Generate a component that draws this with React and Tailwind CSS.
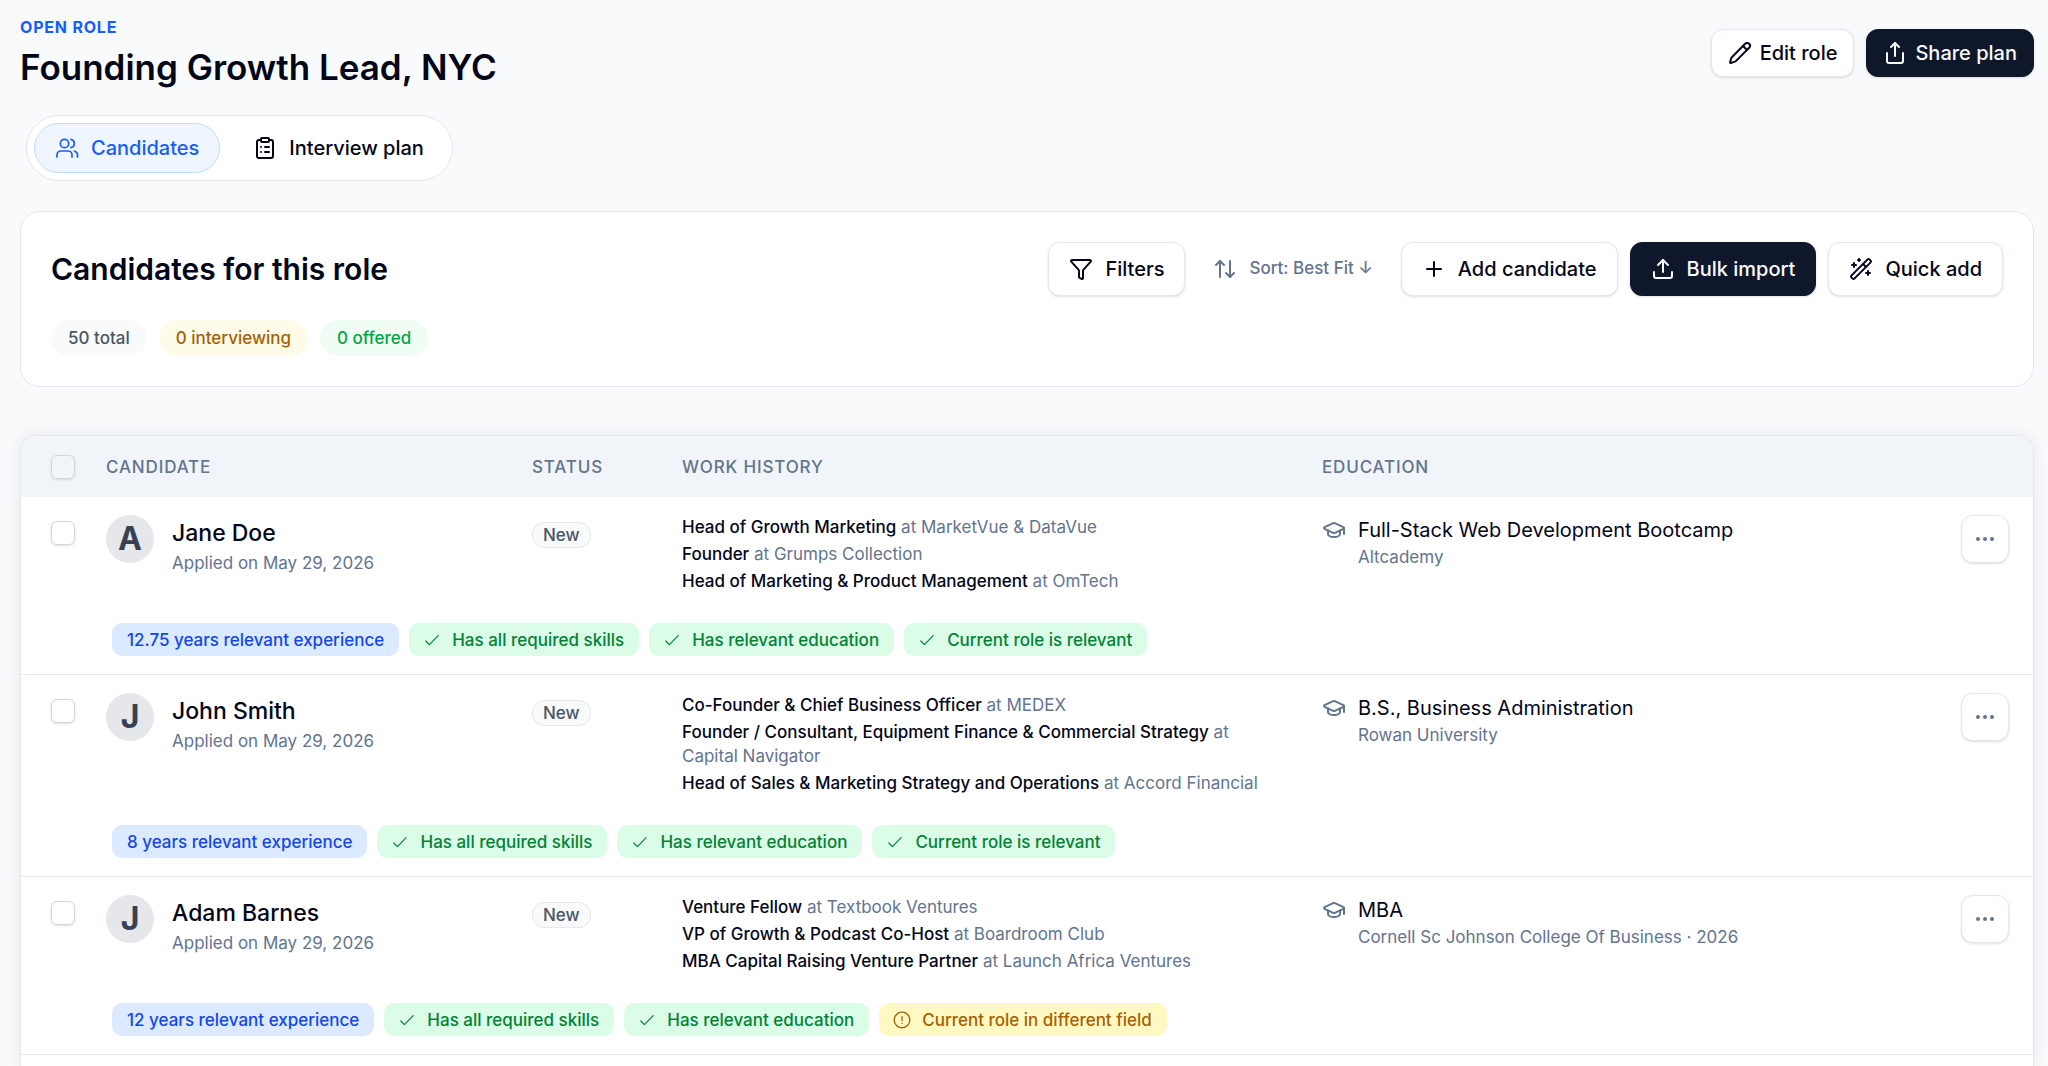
import {
  ArrowUpDown,
  ClipboardList,
  Ellipsis,
  Funnel,
  GraduationCap,
  Pencil,
  Plus,
  Share,
  Upload,
  WandSparkles,
} from 'lucide-react'
import clsx from 'clsx'

const candidates = [
  {
    id: 1,
    initial: 'A',
    name: 'Jane Doe',
    applied: 'May 29, 2026',
    status: 'New',
    work: [
      { title: 'Head of Growth Marketing', company: 'MarketVue & DataVue' },
      { title: 'Founder', company: 'Grumps Collection' },
      { title: 'Head of Marketing & Product Management', company: 'OmTech' },
    ],
    education: { degree: 'Full-Stack Web Development Bootcamp', school: 'Altcademy' },
    tags: [
      { kind: 'info', label: '12.75 years relevant experience' },
      { kind: 'ok', label: 'Has all required skills' },
      { kind: 'ok', label: 'Has relevant education' },
      { kind: 'ok', label: 'Current role is relevant' },
    ],
  },
  {
    id: 2,
    initial: 'J',
    name: 'John Smith',
    applied: 'May 29, 2026',
    status: 'New',
    work: [
      { title: 'Co-Founder & Chief Business Officer', company: 'MEDEX' },
      { title: 'Founder / Consultant, Equipment Finance & Commercial Strategy', company: 'Capital Navigator' },
      { title: 'Head of Sales & Marketing Strategy and Operations', company: 'Accord Financial' },
    ],
    education: { degree: 'B.S., Business Administration', school: 'Rowan University' },
    tags: [
      { kind: 'info', label: '8 years relevant experience' },
      { kind: 'ok', label: 'Has all required skills' },
      { kind: 'ok', label: 'Has relevant education' },
      { kind: 'ok', label: 'Current role is relevant' },
    ],
  },
  {
    id: 3,
    initial: 'J',
    name: 'Adam Barnes',
    applied: 'May 29, 2026',
    status: 'New',
    work: [
      { title: 'Venture Fellow', company: 'Textbook Ventures' },
      { title: 'VP of Growth & Podcast Co-Host', company: 'Boardroom Club' },
      { title: 'MBA Capital Raising Venture Partner', company: 'Launch Africa Ventures' },
    ],
    education: { degree: 'MBA', school: 'Cornell Sc Johnson College Of Business · 2026' },
    tags: [
      { kind: 'info', label: '12 years relevant experience' },
      { kind: 'ok', label: 'Has all required skills' },
      { kind: 'ok', label: 'Has relevant education' },
      { kind: 'warn', label: 'Current role in different field' },
    ],
  },
]

const tagStyles = {
  info: 'bg-blue-100 text-blue-700',
  ok: 'bg-green-100 text-green-700',
  warn: 'bg-yellow-100 text-yellow-700',
}

export default function App() {
  return (
    <div className="flex min-h-screen flex-col bg-[#f9fafc] pt-[15px] pr-[14px] pl-5 font-['Inter',sans-serif] text-slate-950">
      <header className="flex items-center justify-between">
        <div>
          <p className="text-base leading-6 font-bold tracking-wider text-blue-600 uppercase">Open role</p>
          <h1 className="mt-1 text-[35px] leading-[48px] font-semibold">Founding Growth Lead, NYC</h1>
        </div>
        <div className="flex gap-3">
          <Button size="sm"><Pencil className="size-6" strokeWidth={2} />Edit role</Button>
          <Button size="sm" dark><Share className="size-6" strokeWidth={2} />Share plan</Button>
        </div>
      </header>

      <nav className="mt-6 ml-1.5 flex gap-3 self-start rounded-full border border-slate-200 bg-white p-[7px]">
        <Tab active><UsersIcon />Candidates</Tab>
        <Tab><ClipboardList className="size-6" strokeWidth={2} />Interview plan</Tab>
      </nav>

      {/* Summary + actions */}
      <section className="mt-[30px] rounded-[20px] border border-slate-200 bg-white p-[30px]">
        <div className="flex items-center justify-between">
          <h2 className="text-3xl font-semibold">Candidates for this role</h2>
          <div className="flex gap-3">
            <Button><Funnel className="size-6" strokeWidth={2} />Filters</Button>
            <button type="button" className="flex items-center gap-3 px-4 text-[17px] font-medium text-slate-500">
              <ArrowUpDown className="size-6" strokeWidth={2} />
              Sort: Best Fit ↓
            </button>
            <Button><Plus className="size-6" strokeWidth={2} />Add candidate</Button>
            <Button dark><Upload className="size-6" strokeWidth={2} />Bulk import</Button>
            <Button><WandSparkles className="size-6" strokeWidth={2} />Quick add</Button>
          </div>
        </div>
        <div className="mt-6 flex gap-3 text-[17px] leading-9 font-medium">
          <span className="rounded-full bg-gray-50 px-[17px] text-gray-600">50 total</span>
          <span className="rounded-full bg-yellow-50 px-[17px] text-yellow-700">0 interviewing</span>
          <span className="rounded-full bg-green-50 px-[17px] text-green-600">0 offered</span>
        </div>
      </section>

      {/* Candidate list */}
      <div className="mt-12 flex-1 overflow-hidden rounded-t-2xl border border-b-0 border-slate-200 bg-white shadow-[0_0_16px_rgba(15,23,42,0.08)]">
        <table className="w-full table-fixed text-left text-[17px] leading-6">
          <colgroup>
            <col className="w-[85px]" />
            <col className="w-[426px]" />
            <col className="w-[150px]" />
            <col className="w-[640px]" />
            <col />
            <col className="w-[72px]" />
          </colgroup>
          <thead className="bg-slate-100 text-slate-500 uppercase">
            <tr className="h-[61px] tracking-wider">
              <th className="pl-[30px]"><Checkbox label="Select all candidates" /></th>
              <th className="font-medium">Candidate</th>
              <th className="font-medium">Status</th>
              <th className="font-medium">Work history</th>
              <th className="font-medium">Education</th>
              <th />
            </tr>
          </thead>
          {candidates.map((c) => <CandidateRow key={c.id} candidate={c} />)}
        </table>
      </div>
    </div>
  )
}

function CandidateRow({ candidate: c }) {
  return (
    <tbody className="border-b border-slate-200">
      <tr className="align-top">
        <td className="pt-6 pl-[30px]"><Checkbox label={`Select ${c.name}`} /></td>
        <td className="pt-[18px]">
          <div className="flex gap-[18px]">
            <span className="flex size-12 items-center justify-center rounded-full bg-gray-200 text-[32px] font-bold text-gray-700">
              {c.initial}
            </span>
            <div className="flex flex-col gap-1 pt-1">
              <p className="text-[23px] leading-7 font-medium">{c.name}</p>
              <p className="text-slate-500">Applied on {c.applied}</p>
            </div>
          </div>
        </td>
        <td className="pt-[25px]">
          <span className="block w-fit rounded-xl border border-gray-200 bg-gray-50 px-2.5 font-medium text-gray-600">
            {c.status}
          </span>
        </td>
        <td className="pt-[18px] pr-9">
          <ul className="space-y-[3px]">
            {c.work.map((job) => (
              <li key={job.title} className="text-slate-500">
                <span className="font-medium text-slate-950">{job.title}</span> at {job.company}
              </li>
            ))}
          </ul>
        </td>
        <td className="pt-[18px]">
          <div className="flex gap-3">
            <GraduationCap className="mt-[3px] size-6 shrink-0 text-slate-500" strokeWidth={2} />
            <div>
              <p className="text-xl leading-[30px]">{c.education.degree}</p>
              <p className="text-slate-500">{c.education.school}</p>
            </div>
          </div>
        </td>
        <td className="pt-[18px]">
          <button
            type="button"
            aria-label={`Actions for ${c.name}`}
            className="flex size-12 items-center justify-center rounded-xl border border-slate-200 bg-white text-slate-500 shadow-sm"
          >
            <Ellipsis className="size-6" />
          </button>
        </td>
      </tr>
      <tr>
        <td />
        <td colSpan={5} className="pt-[30px] pb-[18px] pl-1.5">
          <div className="flex gap-2.5">
            {c.tags.map((tag) => <Tag key={tag.label} {...tag} />)}
          </div>
        </td>
      </tr>
    </tbody>
  )
}

function Tag({ kind, label }) {
  return (
    <span className={clsx('flex h-[33px] items-center gap-3 rounded-[10px] px-[15px] font-medium', tagStyles[kind])}>
      {kind === 'ok' && <CheckIcon />}
      {kind === 'warn' && <AlertIcon />}
      {label}
    </span>
  )
}

function Button({ size = 'md', dark, children }) {
  return (
    <button
      type="button"
      className={clsx(
        'flex items-center rounded-xl border text-xl font-medium shadow-sm',
        size === 'sm' ? 'h-12 gap-2 px-4' : 'h-[54px] gap-3 px-5',
        dark ? 'border-slate-900 bg-slate-900 text-slate-50' : 'border-slate-200 bg-white'
      )}
    >
      {children}
    </button>
  )
}

function Tab({ active, children }) {
  return (
    <button
      type="button"
      className={clsx(
        'flex h-[50px] items-center gap-3 rounded-full border px-5 text-xl font-medium',
        active ? 'border-blue-200 bg-blue-50 text-blue-600' : 'border-transparent'
      )}
    >
      {children}
    </button>
  )
}

function Checkbox({ label }) {
  return (
    <input
      type="checkbox"
      aria-label={label}
      className="block size-6 appearance-none rounded-md border border-gray-300 shadow-sm"
    />
  )
}

function UsersIcon() {
  return (
    <svg viewBox="0 0 24 24" className="size-6" fill="none" stroke="currentColor" strokeWidth="1.7" strokeLinecap="round" strokeLinejoin="round">
      <circle cx="9.5" cy="7.5" r="4.2" />
      <path d="M2 21v-2a4 4 0 0 1 4-4h7a4 4 0 0 1 4 4v2" />
      <path d="M16 3.4a4.2 4.2 0 0 1 0 8.2" />
      <path d="M22.5 21v-2a4 4 0 0 0-3-3.8" />
    </svg>
  )
}

function CheckIcon() {
  return (
    <svg viewBox="0 0 16 16" className="size-4" fill="none" stroke="currentColor" strokeWidth="1.2" strokeLinecap="round" strokeLinejoin="round">
      <path d="M1.8 9 5.4 12.6 14.2 3.6" />
    </svg>
  )
}

function AlertIcon() {
  return (
    <svg viewBox="0 0 16 16" className="size-4 overflow-visible" fill="none" stroke="currentColor" strokeWidth="1.3" strokeLinecap="round">
      <circle cx="8" cy="8" r="7.8" />
      <path d="M8 4.6v4M8 11.3v.1" />
    </svg>
  )
}
